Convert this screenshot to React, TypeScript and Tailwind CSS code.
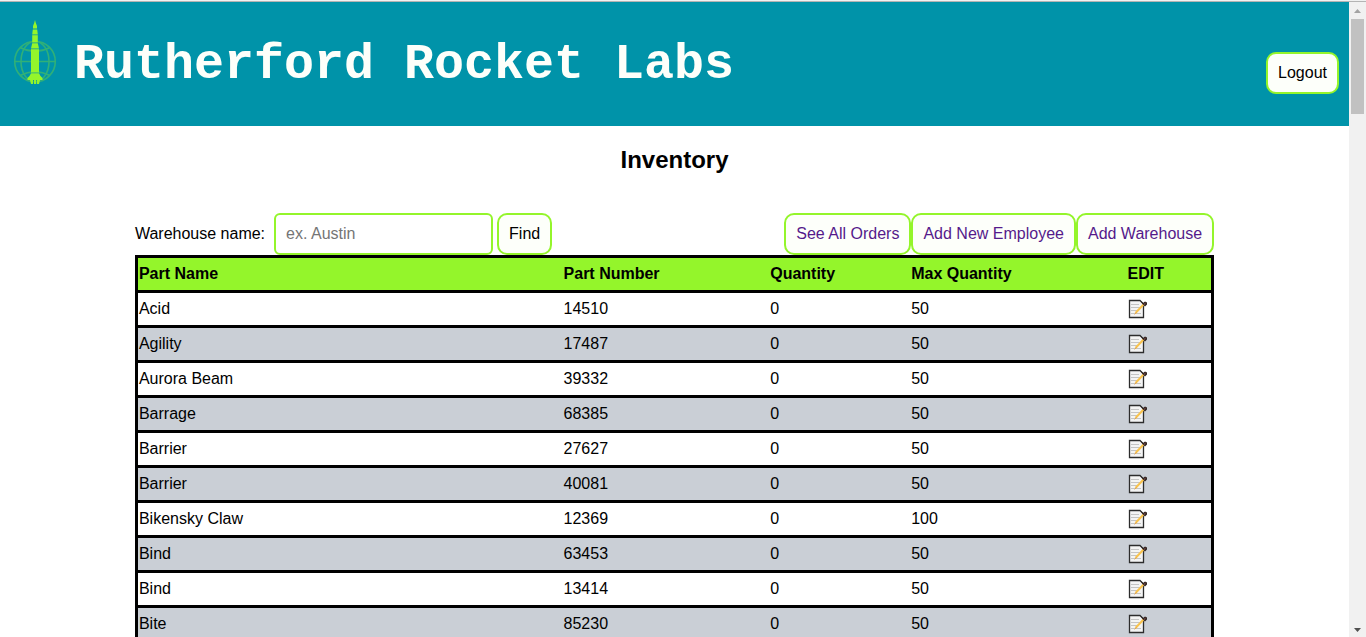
import React from "react";

type Part = { name: string; number: string; quantity: number; max: number };

const parts: Part[] = [
  { name: "Acid", number: "14510", quantity: 0, max: 50 },
  { name: "Agility", number: "17487", quantity: 0, max: 50 },
  { name: "Aurora Beam", number: "39332", quantity: 0, max: 50 },
  { name: "Barrage", number: "68385", quantity: 0, max: 50 },
  { name: "Barrier", number: "27627", quantity: 0, max: 50 },
  { name: "Barrier", number: "40081", quantity: 0, max: 50 },
  { name: "Bikensky Claw", number: "12369", quantity: 0, max: 100 },
  { name: "Bind", number: "63453", quantity: 0, max: 50 },
  { name: "Bind", number: "13414", quantity: 0, max: 50 },
  { name: "Bite", number: "85230", quantity: 0, max: 50 },
];

const boxed =
  "block rounded-[10px] border-2 border-[#94f52b] bg-[#fdfffa] p-[10px] text-base leading-[18px] whitespace-nowrap";

function RocketLogo() {
  return (
    <svg className="h-[70px] w-[50px] shrink-0" viewBox="0 0 50 70" aria-hidden="true">
      <g fill="none" stroke="#30b078" strokeWidth="1.600">
        <circle cx="25" cy="43.500" r="20.300" />
        <ellipse cx="25" cy="43.500" rx="14" ry="20.300" />
        <path d="M4.700 43.500H45.300M10 29.500Q25 37 40 29.500M10 57.500Q25 50 40 57.500" />
      </g>
      <g fill="#94f52b">
        <path d="M25 2L25.800 5L27 8V10.500H23V8L24.200 5Z" />
        <path d="M22.800 11.500H27.200L27.800 16.500H22.200Z" />
        <path d="M22.200 17.200H27.800V24.500H22.200Z" />
        <path d="M22.200 25.200H27.800L29 30.500H21Z" />
        <path d="M21 31.200H29V54.500H21Z" />
        <path d="M21 55.200H29L30.500 58L32.500 60V62H17.500V60L19.500 58Z" />
        <path d="M20 62H23V66H21ZM24 62H26.200V66H24ZM27 62H30L29 66H27Z" />
      </g>
    </svg>
  );
}

function MemoIcon() {
  return (
    <svg className="block h-5 w-5" viewBox="0 0 20 20" aria-hidden="true">
      <path d="M1.500 1.500H12L15.500 5V18.500H1.500Z" fill="#f4f4f4" stroke="#2c2c2c" strokeWidth="1.300" />
      <path d="M3 5.500H11M3 8.500H12M3 11.500H10M3 14.500H13" stroke="#c4c4c4" />
      <path d="M7.500 14L16 5" stroke="#f9c34d" strokeWidth="2" />
      <path d="M6.500 15.300L8.500 13.500" stroke="#e0a050" />
      <path d="M12.500 1.500L15 4L17 2.500L19 3.500V5.500L17 7.500L14.500 5Z" fill="#302522" />
      <path d="M16 5.500L17.500 4.200" stroke="#9b5a55" />
    </svg>
  );
}

function ScrollBar() {
  return (
    <div className="flex w-[17px] shrink-0 flex-col items-center bg-[#f1f1f1]" aria-hidden="true">
      <svg className="h-[17px] w-[17px] shrink-0" viewBox="0 0 17 17">
        <path d="M5 11L8.500 7L12 11Z" fill="#a3a3a3" />
      </svg>
      <div className="h-[95px] w-[13px] bg-[#c1c1c1]" />
      <svg className="mt-auto h-[17px] w-[17px] shrink-0" viewBox="0 0 17 17">
        <path d="M5 8L12 8L8.500 12Z" fill="#505050" />
      </svg>
    </div>
  );
}

export default function App() {
  return (
    <div className="flex h-screen flex-col overflow-hidden bg-white font-['Liberation_Sans',Arial,sans-serif] text-base text-black">
      <div className="h-0.5 shrink-0 border-b border-[#b4b4b4] bg-[#f1f1f1]" />
      <div className="flex min-h-0 flex-1">
        <div className="min-w-0 flex-1 overflow-hidden">
          <header className="flex items-start justify-between bg-[#0093a9] px-[10px] pt-4 pb-8">
            <div className="flex items-start gap-[14px]">
              <RocketLogo />
              <h1 className="pt-6 font-['Liberation_Mono','Courier_New',monospace] text-[50px] leading-[46px] font-bold whitespace-nowrap text-[#fdfffa]">
                Rutherford Rocket Labs
              </h1>
            </div>
            <button type="button" className={`${boxed} mt-[34px]`}>
              Logout
            </button>
          </header>

          <main className="mx-auto w-4/5">
            <h2 className="pt-5 pb-10 text-center text-2xl leading-[27px] font-bold">Inventory</h2>

            <div className="flex items-center justify-between">
              <form className="flex items-center" onSubmit={(e) => e.preventDefault()}>
                <label htmlFor="warehouse" className="mr-[9px] whitespace-nowrap">
                  Warehouse name:
                </label>
                <input
                  id="warehouse"
                  type="text"
                  placeholder="ex. Austin"
                  className="mr-1 h-[42px] w-[219px] rounded-md border-2 border-[#94f52b] bg-white px-[10px] text-base placeholder:text-[#757575]"
                />
                <button type="submit" className={boxed}>
                  Find
                </button>
              </form>
              <nav className="flex text-[#551a8b]">
                <a href="#orders" className={boxed}>
                  See All Orders
                </a>
                <a href="#employee" className={boxed}>
                  Add New Employee
                </a>
                <a href="#warehouse-new" className={boxed}>
                  Add Warehouse
                </a>
              </nav>
            </div>

            <table className="w-full table-fixed border-collapse border-3 border-black text-left">
              <colgroup>
                <col className="w-[39.6%]" />
                <col className="w-[19.2%]" />
                <col className="w-[13.1%]" />
                <col className="w-[20.1%]" />
                <col />
              </colgroup>
              <thead>
                <tr className="h-[35px] border-3 border-black bg-[#94f52b]">
                  <th className="p-px">Part Name</th>
                  <th className="p-px">Part Number</th>
                  <th className="p-px">Quantity</th>
                  <th className="p-px">Max Quantity</th>
                  <th className="p-px">EDIT</th>
                </tr>
              </thead>
              <tbody>
                {parts.map((part) => (
                  <tr key={part.number} className="h-[35px] border-3 border-black even:bg-[#cacfd6]">
                    <td className="p-px">{part.name}</td>
                    <td className="p-px">{part.number}</td>
                    <td className="p-px">{part.quantity}</td>
                    <td className="p-px">{part.max}</td>
                    <td className="p-px pl-0.5">
                      <button type="button" aria-label={`Edit ${part.name}`} className="block">
                        <MemoIcon />
                      </button>
                    </td>
                  </tr>
                ))}
              </tbody>
            </table>
          </main>
        </div>
        <ScrollBar />
      </div>
    </div>
  );
}
